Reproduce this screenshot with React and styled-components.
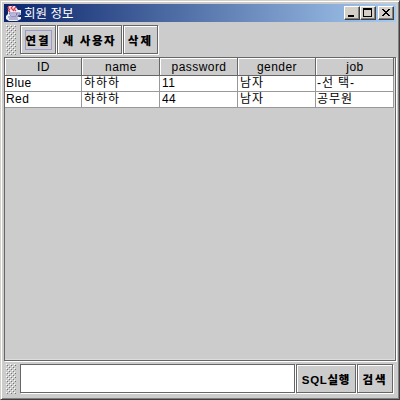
import React from "react";
import styled, { createGlobalStyle } from "styled-components";

const Global = createGlobalStyle`
  * { box-sizing: border-box; }
  body { margin: 0; background: #ccc; }
`;
const Window = styled.main`
  width: 400px; height: 400px; padding: 2px; overflow: hidden;
  display: flex; flex-direction: column;
  background: #ccc; color: #000;
  font: 12px "Liberation Sans", "Noto Sans CJK KR", sans-serif;
  border: 1px solid; border-color: #d4d0c8 #404040 #404040 #d4d0c8;
  box-shadow: inset 1px 1px #fff, inset -1px -1px #808080;
`;
const Body = styled.div`
  margin: 1px; flex: 1; min-height: 0; display: flex; flex-direction: column;
`;
const TitleBar = styled.header`
  height: 18px; flex: none; display: flex; align-items: center;
  padding: 0 2px; color: #fff;
  background: linear-gradient(90deg, #0a246a, #a6caf0);
`;
const Title = styled.h1`
  margin: 0 auto 0 2px; padding-top: 1px; font-size: 12.5px; font-weight: 400; line-height: 18px;
  white-space: nowrap; letter-spacing: 0;
`;
const WindowButton = styled.button`
  width: 16px; height: 14px; padding: 0; margin-left: ${p => p.$gap || 0}px;
  background: #d4d0c8; display: block;
  border: 1px solid; border-color: #fff #404040 #404040 #fff;
  box-shadow: inset -1px -1px #808080;
  svg { display: block; }
`;
const ToolBar = styled.div`
  height: 35px; flex: none; display: flex; align-items: flex-start;
  padding: 3px 0 0 2px;
`;
const Grip = styled.div`
  width: 10px; height: 30px; margin-right: 4px;
  background-color: #ccc;
  background-image:
    radial-gradient(circle at 0.5px 0.5px, #fff 0.6px, transparent 0.6px),
    radial-gradient(circle at 1.5px 1.5px, #777 0.6px, transparent 0.6px),
    radial-gradient(circle at 2.5px 2.5px, #fff 0.6px, transparent 0.6px),
    radial-gradient(circle at 3.5px 3.5px, #777 0.6px, transparent 0.6px);
  background-size: 4px 4px;
`;
const Button = styled.button`
  width: ${p => p.$width}px; height: 29px; padding: 0; margin-right: 1px;
  background: #ccc; border: 1px solid #666; border-radius: 0;
  box-shadow: inset 1px 1px #fff, 1px 1px #fff;
  display: flex; align-items: center; justify-content: center;
  font: 900 11.5px "Liberation Sans", "Noto Sans CJK KR", sans-serif;
  color: #000; white-space: nowrap; letter-spacing: ${p => p.$spacing || 0}px;
`;
const Focus = styled.span`
  display: flex; align-items: center; justify-content: center;
  width: 27px; height: 20px; border: 1px solid #9999cc;
`;
const Field = styled.input`
  width: 275px; height: 29px; border: 1px solid #666; border-radius: 0;
  margin: 0 1px 0 0; padding: 0 2px; background: #fff; outline: none;
  box-shadow: 1px 1px #fff;
`;
const Scroll = styled.section`
  width: 392px; height: 304px; flex: none;
  border: 1px solid #666; box-shadow: inset -1px -1px #ddd, 1px 1px #fff;
`;
const Table = styled.div`
  width: 389px; display: grid; grid-template-columns: 77px repeat(4, 78px);
`;
const Head = styled.div`
  height: 18px; line-height: 18px; text-align: center; letter-spacing: 0.45px;
  padding-left: 1px;
  border: solid #666; border-width: 0 1px 1px 0;
  box-shadow: inset 1px 1px #fff;
`;
const Cell = styled.div`
  height: 16px; line-height: 15px; padding-left: ${p => p.$inset}px; overflow: hidden;
  background: #fff; border: solid #999; border-width: 0 1px 1px 0;
  white-space: nowrap; letter-spacing: ${p => p.$spacing || 0}px;
`;

const JavaIcon = () => (
  <svg width="16" height="16" viewBox="0 0 16 16">
    <path d="M2 1h7l3 4h3v5h-3v2h3v2l-4 2H3l-3-2v-3l2-2z" fill="#f1edf7" />
    <path d="M3 1L2 3l2 2M7 1L5 3l3 3M10 2L8 4l2 2M2 5l2 2" fill="none" stroke="#e33b4c" strokeWidth="1.2" />
    <path d="M3 8h8l-1 3H5zM11 8h3v2h-3M2 12h9l2-1M3 14h9" fill="none" stroke="#7476ae" />
    <path d="M4 9h6l-1 2H5z" fill="#b7b9df" />
  </svg>
);
const Glyph = ({ kind }) => (
  <svg width="14" height="12" viewBox="0 0 14 12" shapeRendering="crispEdges">
    {kind === "min" && <path d="M3 8h6v2H3z" fill="#000" />}
    {kind === "max" && <path d="M2 1h9v9H2zM3 3v6h7V3z" fill="#000" fillRule="evenodd" />}
    {kind === "close" && <path d="M3 2h2v1h1v1h2V3h1V2h2v1h-1v1H9v1H8v1h1v1h1v1h1v1H9V8H8V7H6v1H5v1H3V8h1V7h1V6h1V5H5V4H4V3H3z" fill="#000" />}
  </svg>
);
const rows = [
  ["Blue", "하하하", "11", "남자", "-선 택-"],
  ["Red", "하하하", "44", "남자", "공무원"],
];

export default function App() {
  return (
    <Window>
      <Global />
      <Body>
        <TitleBar>
          <JavaIcon />
          <Title>회원 정보</Title>
          <WindowButton aria-label="Minimize"><Glyph kind="min" /></WindowButton>
          <WindowButton aria-label="Maximize"><Glyph kind="max" /></WindowButton>
          <WindowButton aria-label="Close" $gap={2}><Glyph kind="close" /></WindowButton>
        </TitleBar>
        <ToolBar>
          <Grip />
          <Button $width={36} $spacing={2}><Focus>연결</Focus></Button>
          <Button $width={65} $spacing={1.6}>새 사용자</Button>
          <Button $width={35} $spacing={2.2}>삭제</Button>
        </ToolBar>
        <Scroll>
          <Table>
            {["ID", "name", "password", "gender", "job"].map(h => <Head key={h}>{h}</Head>)}
            {rows.flatMap((row, r) => row.map((v, c) => (
              <Cell key={`${r}-${c}`} $inset={c === 0 || c === 4 ? 1 : 2} $spacing={c % 2 || c === 4 ? 0.9 : 0.4}>{v}</Cell>
            )))}
          </Table>
        </Scroll>
        <ToolBar>
          <Grip />
          <Field aria-label="SQL" />
          <Button $width={60} $spacing={0.7}>SQL실행</Button>
          <Button $width={36} $spacing={2}>검색</Button>
        </ToolBar>
      </Body>
    </Window>
  );
}
